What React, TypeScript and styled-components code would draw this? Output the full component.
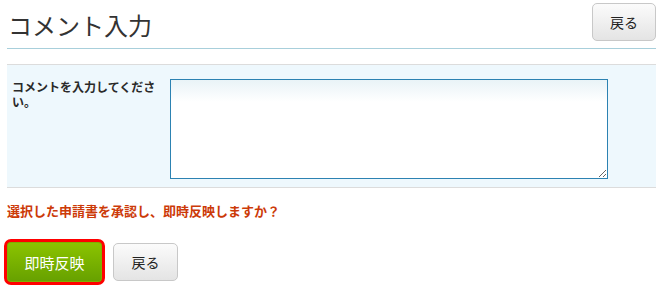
import React, { ReactElement } from 'react';
import styled, { createGlobalStyle } from 'styled-components';

const GlobalStyle = createGlobalStyle`
  html, body {
    margin: 0;
    padding: 0;
    background: #ffffff;
  }
  body {
    font-family: "Noto Sans CJK JP", "Noto Sans", sans-serif;
    color: #333333;
  }
`;

const Page = styled.div`
  width: 649px;
  padding: 0 6px 0 7px;
`;

const Header = styled.div`
  display: flex;
  justify-content: space-between;
  align-items: center;
  height: 48px;
  border-bottom: 1px solid #a8cfdb;
`;

const Title = styled.h1`
  margin: 0 0 0 1px;
  font-size: 24px;
  font-weight: normal;
  color: #333333;
  line-height: 1;
  padding-top: 2px;
`;

const Button = styled.button<{ $width: number }>`
  width: ${(p) => p.$width}px;
  height: 38px;
  border: 1px solid #c8c8c8;
  border-radius: 5px;
  background: linear-gradient(#fbfbfb, #e4e4e4);
  font-family: inherit;
  font-size: 14px;
  color: #222222;
  padding: 0;
  cursor: pointer;
`;

const HeaderButton = styled(Button)`
  margin-top: -4px;
`;

const Panel = styled.div`
  margin-top: 15px;
  display: flex;
  align-items: flex-start;
  background: #eef8fd;
  border-top: 1px solid #dcdcdc;
  border-bottom: 1px solid #dcdcdc;
  padding: 14px 0 8px 5px;
`;

const Label = styled.label`
  width: 150px;
  margin-right: 8px;
  font-size: 12px;
  font-weight: bold;
  line-height: 15px;
  color: #2a2a2a;
`;

const CommentArea = styled.textarea`
  width: 438px;
  height: 100px;
  box-sizing: border-box;
  border: 1px solid #2c82b2;
  background: linear-gradient(#e9f3f7, #ffffff 22px);
  resize: both;
  margin: 0;
  font-family: inherit;
`;

const Confirm = styled.p`
  margin: 14px 0 0;
  font-size: 13px;
  font-weight: bold;
  line-height: 18px;
  color: #cc3a08;
`;

const Actions = styled.div`
  display: flex;
  align-items: center;
  gap: 8px;
  margin: 19px 0 0 -3px;
`;

const SubmitButton = styled.button`
  width: 101px;
  height: 46px;
  border: 3px solid #ff0000;
  border-radius: 7px;
  padding: 0;
  background: linear-gradient(#8cc400, #66a000);
  box-shadow: inset 0 0 0 1px #7fb000;
  color: #ffffff;
  font-family: inherit;
  font-size: 15px;
  cursor: pointer;
`;

function App(): ReactElement {
  return (
    <Page>
      <GlobalStyle />
      <Header>
        <Title>コメント入力</Title>
        <HeaderButton $width={64}>戻る</HeaderButton>
      </Header>
      <Panel>
        <Label htmlFor="comment">コメントを入力してください。</Label>
        <CommentArea id="comment" />
      </Panel>
      <Confirm>選択した申請書を承認し、即時反映しますか？</Confirm>
      <Actions>
        <SubmitButton>即時反映</SubmitButton>
        <Button $width={65}>戻る</Button>
      </Actions>
    </Page>
  );
}

export default App;
